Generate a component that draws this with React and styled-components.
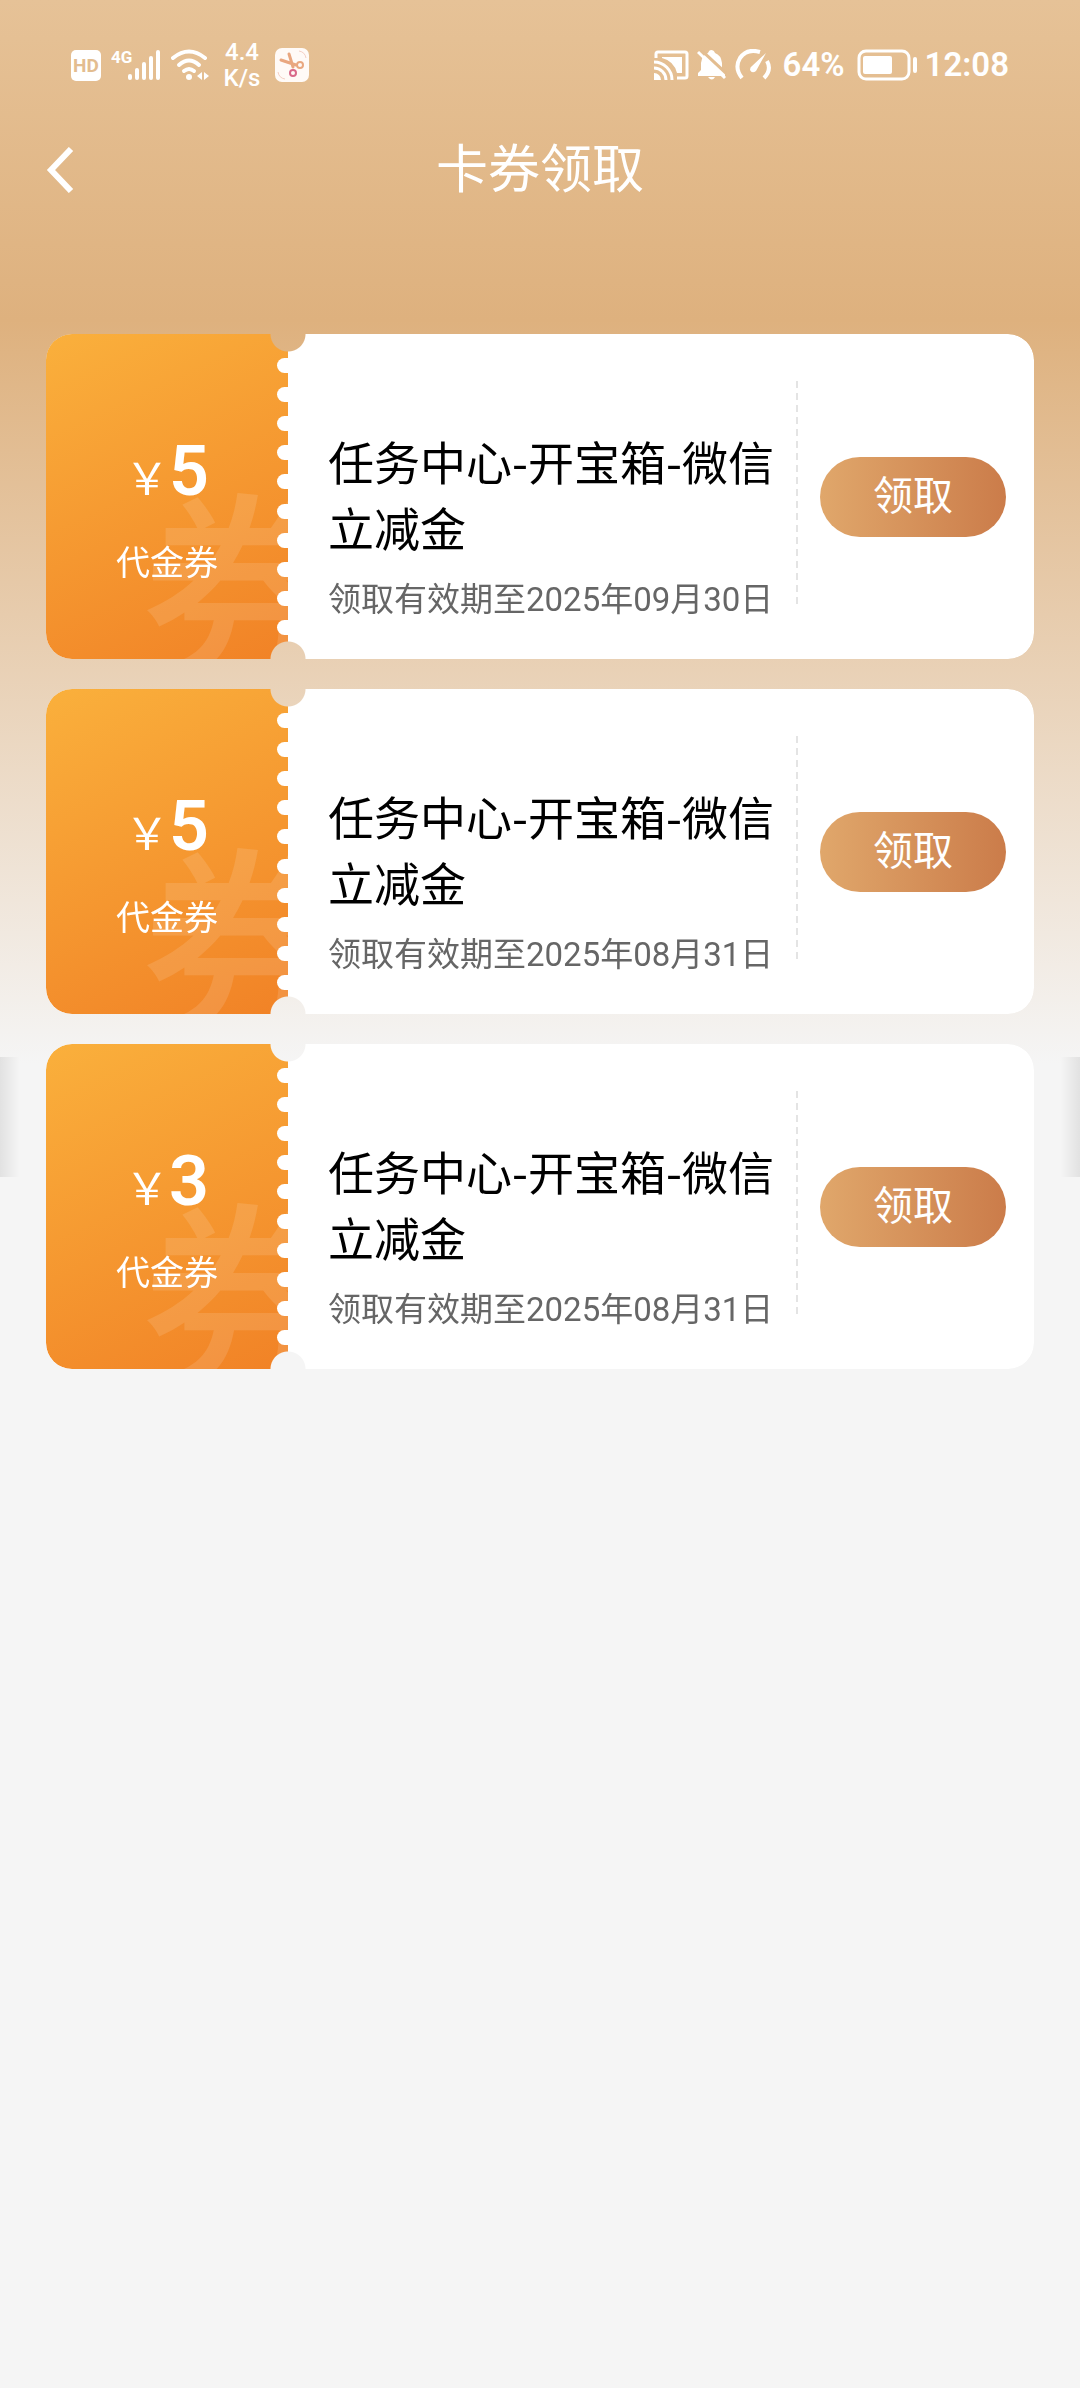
import React from 'react'
import styled, { createGlobalStyle } from 'styled-components'

const GlobalStyle = createGlobalStyle`
    *{
        box-sizing: border-box;
        margin: 0;
        padding: 0;
    }
    body{
        background-color: #f5f5f5;
        font-family: Roboto, 'Noto Sans CJK SC', sans-serif;
    }
    button{
        border: none;
        background: none;
        color: inherit;
        font-family: inherit;
        cursor: pointer;
    }
`

const Page = styled.div`
    min-height: 100vh;
    background: linear-gradient(#e6c297 0, #deb17e 320px, #f5f5f5 1064px);
    color: #fff;
`

const StatusBar = styled.div`
    height: 130px;
    padding: 0 71px;
    display: flex;
    align-items: center;
    justify-content: space-between;
`

const StatusGroup = styled.div`
    display: flex;
    align-items: center;
    gap: ${({ $gap }) => $gap}px;
`

const StatusText = styled.span`
    min-width: 70px;
    font-size: 33px;
    line-height: 36px;
    font-weight: 600;
    text-align: center;
`

const NetSpeed = styled.span`
    width: 46px;
    font-size: 24px;
    line-height: 26px;
    font-weight: 500;
    text-align: center;
`

const NavBar = styled.header`
    height: 80px;
    padding: 0 40px;
    display: grid;
    grid-template-columns: 80px 1fr 80px;
    align-items: center;
`

const BackButton = styled.button`
    width: 40px;
    height: 56px;
    display: flex;
    align-items: center;
    justify-content: center;
`

const NavTitle = styled.h1`
    padding-top: 2px;
    font-size: 52px;
    line-height: 76px;
    font-weight: 400;
    text-align: center;
`

const CouponList = styled.ul`
    padding: 124px 46px 46px;
    display: flex;
    flex-direction: column;
    gap: 30px;
    list-style: none;
`

const CouponCard = styled.li`
    min-height: 325px;
    display: flex;
    background-color: #fff;
    border-radius: 26px;
    overflow: hidden;
    mask-image:
        radial-gradient(circle at 242px 0, transparent 17px, #000 18px),
        radial-gradient(circle at 242px 100%, transparent 17px, #000 18px);
    mask-composite: intersect;
`

const Stub = styled.div`
    position: relative;
    flex: 0 0 242px;
    padding-top: 26px;
    display: flex;
    flex-direction: column;
    align-items: center;
    justify-content: center;
    gap: 22px;
    overflow: hidden;
    background: linear-gradient(155deg, #fab03c, #f18226);
`

const Watermark = styled.span`
    position: absolute;
    left: 95px;
    top: 144px;
    font-size: 204px;
    line-height: 240px;
    font-weight: 500;
    color: rgba(255, 255, 255, 0.12);
`

const Perforation = styled.div`
    position: absolute;
    top: 24px;
    right: 0;
    bottom: 24px;
    display: flex;
    flex-direction: column;
    justify-content: space-between;
    span{
        width: 11px;
        height: 15px;
        border-radius: 8px 0 0 8px;
        background-color: #fff;
    }
`

const Amount = styled.p`
    position: relative;
    font-size: 70px;
    line-height: 80px;
    font-weight: 600;
    small{
        font-family: 'Noto Sans CJK SC', sans-serif;
        font-size: 44px;
        font-weight: 400;
    }
`

const Kind = styled.p`
    position: relative;
    font-size: 34px;
    line-height: 50px;
`

const Info = styled.div`
    flex: 1;
    min-width: 0;
    padding: 42px 8px 35px 40px;
    display: flex;
    flex-direction: column;
    justify-content: flex-end;
    gap: 17px;
`

const CouponTitle = styled.h2`
    font-family: 'Noto Sans CJK SC', sans-serif;
    font-size: 46px;
    line-height: 66px;
    font-weight: 400;
    color: #000;
`

const Expiry = styled.p`
    font-size: 33px;
    line-height: 48px;
    color: #666;
    white-space: nowrap;
`

const Action = styled.div`
    position: relative;
    flex: 0 0 238px;
    padding-right: 4px;
    display: flex;
    align-items: center;
    justify-content: center;
    &::before{
        content: '';
        position: absolute;
        left: 0;
        top: 47px;
        bottom: 50px;
        width: 2px;
        background: repeating-linear-gradient(#e4e4e4 0 7px, transparent 7px 12px);
    }
`

const ClaimButton = styled.button`
    width: 186px;
    height: 80px;
    border-radius: 40px;
    background: linear-gradient(90deg, #e0a76b, #cb7c4a);
    font-size: 40px;
    line-height: 58px;
`

const EdgeGlow = styled.div`
    position: absolute;
    top: 1057px;
    ${({ $side }) => $side}: 0;
    width: 20px;
    height: 120px;
    background: linear-gradient(to ${({ $side }) => $side}, transparent, rgba(0, 0, 0, 0.08));
`

const HdIcon = () => (
    <svg width="30" height="31" viewBox="0 0 30 31">
        <rect width="30" height="31" rx="5" fill="#fff" />
        <text x="15" y="22" textAnchor="middle" fontSize="19" fontWeight="700" fill="#e3bd90">HD</text>
    </svg>
)

const SignalIcon = () => (
    <svg width="50" height="34" viewBox="0 0 50 34" fill="#fff">
        <text x="0" y="15" fontSize="17" fontWeight="700" fontFamily="Liberation Sans Narrow, Roboto, sans-serif">4G</text>
        <rect x="17" y="26" width="4" height="6" rx="2" />
        <rect x="24" y="20" width="4" height="12" rx="2" />
        <rect x="31" y="14" width="4" height="18" rx="2" />
        <rect x="38" y="8" width="4" height="24" rx="2" />
        <rect x="45" y="2" width="4" height="30" rx="2" />
    </svg>
)

const WifiIcon = () => (
    <svg width="38" height="32" viewBox="0 0 38 32" fill="none" stroke="#fff" strokeWidth="4" strokeLinecap="round">
        <path d="M2 9Q18 -4 34 9" />
        <path d="M8 16Q18 7 28 16" />
        <path d="M13 22Q18 18 23 22" />
        <circle cx="18" cy="28" r="3" fill="#fff" stroke="none" />
        <path d="M31 23v8l-5-4zM33 23v8l5-4z" fill="#fff" stroke="none" />
    </svg>
)

const ScissorsIcon = () => (
    <svg width="34" height="34" viewBox="0 0 34 34" fill="none">
        <rect width="34" height="34" rx="7" fill="#fffaf7" />
        <path d="M6 12L21 17M14 6L18 19" stroke="#e9a780" strokeWidth="3" strokeLinecap="round" />
        <circle cx="25" cy="17" r="3" stroke="#e9a780" strokeWidth="2" />
        <circle cx="18" cy="25" r="3" stroke="#d9698a" strokeWidth="2" />
        <path d="M3 24Q4 30 10 31M24 3Q30 4 31 10" stroke="#f4cfc4" strokeWidth="1" />
    </svg>
)

const CastIcon = () => (
    <svg width="35" height="30" viewBox="0 0 35 30" fill="none" stroke="#fff" strokeWidth="3">
        <path d="M2 8V4Q2 2 4 2H31Q33 2 33 4V26Q33 28 31 28H23" />
        <path d="M8 7H28V23H23Q20 11 8 8Z" fill="#fff" stroke="none" />
        <path d="M0 12A18 18 0 0 1 18 30M0 18A12 12 0 0 1 12 30" />
        <path d="M0 23A7 7 0 0 1 7 30H0Z" fill="#fff" stroke="none" />
    </svg>
)

const MuteIcon = () => (
    <svg width="30" height="30" viewBox="0 0 30 30" fill="#fff">
        <path d="M1 26V23L4 20V13Q5 5 11 3Q12 0 14 0Q17 0 18 3Q24 5 25 13V20L28 23V26Z" />
        <path d="M11 27H18Q15 32 11 27Z" />
        <path d="M2 -2L32 26" stroke="#e3bd90" strokeWidth="3" />
        <path d="M1 2L28 28" stroke="#fff" strokeWidth="3" />
    </svg>
)

const GaugeIcon = () => (
    <svg width="36" height="32" viewBox="0 0 36 32" fill="none" stroke="#fff" strokeWidth="4">
        <path d="M7 29Q-1 19 5 9Q12 -1 25 3" />
        <path d="M32 12Q37 21 29 29" />
        <path d="M31 4L21 22Q17 25 15 21Q15 18 17 17Z" fill="#fff" stroke="none" />
    </svg>
)

const BatteryIcon = () => (
    <svg width="60" height="32" viewBox="0 0 60 32" fill="#fff">
        <rect x="2" y="2" width="50" height="28" rx="7" fill="none" stroke="#fff" strokeWidth="3" />
        <rect x="6" y="7" width="29" height="18" rx="2" />
        <rect x="56" y="8" width="4" height="16" rx="2" />
    </svg>
)

const coupons = [
    { id: 1, amount: 5, title: '任务中心-开宝箱-微信立减金', expiry: '2025年09月30日' },
    { id: 2, amount: 5, title: '任务中心-开宝箱-微信立减金', expiry: '2025年08月31日' },
    { id: 3, amount: 3, title: '任务中心-开宝箱-微信立减金', expiry: '2025年08月31日' },
]

function Coupon({ amount, title, expiry }) {
    return (
        <CouponCard>
            <Stub>
                <Watermark aria-hidden="true">券</Watermark>
                <Amount><small>￥</small>{amount}</Amount>
                <Kind>代金券</Kind>
                <Perforation>
                    {Array.from({ length: 10 }, (_, i) => <span key={i} />)}
                </Perforation>
            </Stub>
            <Info>
                <CouponTitle>{title}</CouponTitle>
                <Expiry>领取有效期至{expiry}</Expiry>
            </Info>
            <Action>
                <ClaimButton type="button">领取</ClaimButton>
            </Action>
        </CouponCard>
    )
}

export default function App() {
    return (
        <Page>
            <GlobalStyle />
            <StatusBar>
                <StatusGroup $gap={10}>
                    <HdIcon />
                    <SignalIcon />
                    <WifiIcon />
                    <NetSpeed>4.4 K/s</NetSpeed>
                    <ScissorsIcon />
                </StatusGroup>
                <StatusGroup $gap={8}>
                    <CastIcon />
                    <MuteIcon />
                    <GaugeIcon />
                    <StatusText>64%</StatusText>
                    <BatteryIcon />
                    <StatusText>12:08</StatusText>
                </StatusGroup>
            </StatusBar>
            <NavBar>
                <BackButton type="button" aria-label="返回">
                    <svg width="28" height="46" viewBox="0 0 28 46" fill="none" stroke="#fff" strokeWidth="6">
                        <path d="M25 2L5 23L25 44" />
                    </svg>
                </BackButton>
                <NavTitle>卡券领取</NavTitle>
            </NavBar>
            <CouponList>
                {coupons.map((coupon) => (
                    <Coupon key={coupon.id} {...coupon} />
                ))}
            </CouponList>
            <EdgeGlow $side="left" />
            <EdgeGlow $side="right" />
        </Page>
    )
}
